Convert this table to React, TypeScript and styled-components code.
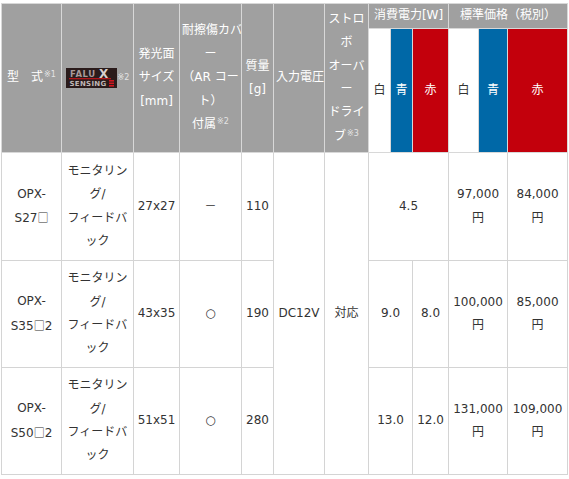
import React from 'react';
import styled, {createGlobalStyle} from 'styled-components';

const GlobalStyle = createGlobalStyle`
  html, body {
    margin: 0;
    padding: 0;
    background: #fff;
  }
  body {
    font-family: "DejaVu Sans", "Noto Sans CJK JP", sans-serif;
    font-size: 12px;
    color: #333;
  }
`;

const Wrapper = styled.div`
  padding: 3px 0 0 1px;
`;

const Table = styled.table`
  width: 567px;
  table-layout: fixed;
  border-collapse: collapse;
  border: 1px solid #d4d4d4;
  line-height: 23.4px;
`;

const Row = styled.tr<{ $h: number }>`
  height: ${p => p.$h}px;
`;

type Tone = 'gray' | 'white' | 'blue' | 'red';

const toneBg: Record<Tone, string> = {
  gray: '#a0a0a0',
  white: '#ffffff',
  blue: '#0068a7',
  red: '#c3000c',
};

const HeadCell = styled.th<{ $tone?: Tone }>`
  background: ${p => toneBg[p.$tone || 'gray']};
  color: ${p => (p.$tone === 'white' ? '#333' : '#fff')};
  font-weight: normal;
  text-align: center;
  vertical-align: middle;
  padding: 0 2px;
  border: 1px solid #d8d8d8;
  white-space: nowrap;
  overflow: hidden;
`;

const Cell = styled.td`
  text-align: center;
  vertical-align: middle;
  padding: 0 2px;
  border: 1px solid #d4d4d4;
  white-space: nowrap;
  overflow: hidden;
`;

const Sup = styled.sup`
  font-size: 8px;
  line-height: 0;
  color: #e4e4e4;
  vertical-align: 4px;
  margin-left: 1px;
`;

// 型番の「□」は和文フォントで出す
const Square = styled.span`
  font-family: "Noto Sans CJK JP", sans-serif;
  font-size: 11px;
`;

const LogoWrap = styled.span`
  display: inline-flex;
  align-items: center;
  vertical-align: middle;
`;

function FaluxLogo() {
  return (
    <svg width="51" height="20" viewBox="0 0 51 20">
      <rect width="51" height="20" fill="#2a1b1b"/>
      <text x="4" y="9" fontSize="8.5" fontWeight="bold" fill="#a8989a"
            fontFamily="DejaVu Sans, sans-serif" letterSpacing="0.6">FALU</text>
      <text x="33" y="10" fontSize="12" fontWeight="bold" fill="#d6cfcf"
            fontFamily="DejaVu Sans, sans-serif">X</text>
      <rect x="3" y="10" width="42" height="1.3" fill="#b0161b"/>
      <text x="3.5" y="17.8" fontSize="7" fontWeight="bold" fill="#bfb6b6"
            fontFamily="DejaVu Sans, sans-serif" letterSpacing="0.3">SENSING</text>
      <rect x="43" y="12" width="5" height="1.6" fill="#d0161e"/>
      <rect x="43" y="14.5" width="5" height="1.6" fill="#d0161e"/>
      <rect x="43" y="17" width="5" height="1.6" fill="#d0161e"/>
    </svg>
  );
}

const colWidths = [60, 72, 46, 62, 32, 51, 44, 22, 22, 36, 30, 29, 60];

const usage = (
  <>
    モニタリン<br/>グ/<br/>フィードバ<br/>ック
  </>
);

type Product = {
  series: string;
  suffix: string;
  size: string;
  cover: string;
  weight: string;
  power: { value: string; span: number }[];
  prices: { value: string; span: number }[];
  height: number;
};

const products: Product[] = [
  {
    series: 'S27',
    suffix: '',
    size: '27x27',
    cover: '－',
    weight: '110',
    power: [{value: '4.5', span: 3}],
    prices: [{value: '97,000', span: 2}, {value: '84,000', span: 1}],
    height: 108,
  },
  {
    series: 'S35',
    suffix: '2',
    size: '43x35',
    cover: '○',
    weight: '190',
    power: [{value: '9.0', span: 2}, {value: '8.0', span: 1}],
    prices: [{value: '100,000', span: 2}, {value: '85,000', span: 1}],
    height: 107,
  },
  {
    series: 'S50',
    suffix: '2',
    size: '51x51',
    cover: '○',
    weight: '280',
    power: [{value: '13.0', span: 2}, {value: '12.0', span: 1}],
    prices: [{value: '131,000', span: 2}, {value: '109,000', span: 1}],
    height: 107,
  },
];

export default function App() {
  return (
    <Wrapper>
      <GlobalStyle/>
      <Table>
        <colgroup>
          {colWidths.map((w, i) => <col key={i} style={{width: w}}/>)}
        </colgroup>
        <thead>
          <Row $h={25}>
            <HeadCell rowSpan={2}>型　式<Sup>※1</Sup></HeadCell>
            <HeadCell rowSpan={2}>
              <LogoWrap><FaluxLogo/><Sup>※2</Sup></LogoWrap>
            </HeadCell>
            <HeadCell rowSpan={2}>発光面<br/>サイズ<br/>[mm]</HeadCell>
            <HeadCell rowSpan={2}>
              耐擦傷カバ<br/>ー<br/>（AR コー<br/>ト）<br/>付属<Sup>※2</Sup>
            </HeadCell>
            <HeadCell rowSpan={2}>質量<br/>[g]</HeadCell>
            <HeadCell rowSpan={2}>入力電圧</HeadCell>
            <HeadCell rowSpan={2}>
              ストロ<br/>ボ<br/>オーバ<br/>ー<br/>ドライ<br/>ブ<Sup>※3</Sup>
            </HeadCell>
            <HeadCell colSpan={3}>消費電力[W]</HeadCell>
            <HeadCell colSpan={3}>標準価格（税別）</HeadCell>
          </Row>
          <Row $h={124}>
            <HeadCell $tone="white">白</HeadCell>
            <HeadCell $tone="blue">青</HeadCell>
            <HeadCell $tone="red">赤</HeadCell>
            <HeadCell $tone="white">白</HeadCell>
            <HeadCell $tone="blue">青</HeadCell>
            <HeadCell $tone="red">赤</HeadCell>
          </Row>
        </thead>
        <tbody>
          {products.map((p, i) => (
            <Row key={p.series} $h={p.height}>
              <Cell>OPX-<br/>{p.series}<Square>□</Square>{p.suffix}</Cell>
              <Cell>{usage}</Cell>
              <Cell>{p.size}</Cell>
              <Cell>{p.cover}</Cell>
              <Cell>{p.weight}</Cell>
              {i === 0 && <Cell rowSpan={3}>DC12V</Cell>}
              {i === 0 && <Cell rowSpan={3}>対応</Cell>}
              {p.power.map((w, j) => <Cell key={j} colSpan={w.span}>{w.value}</Cell>)}
              {p.prices.map((v, j) => (
                <Cell key={j} colSpan={v.span}>{v.value}<br/>円</Cell>
              ))}
            </Row>
          ))}
        </tbody>
      </Table>
    </Wrapper>
  );
}
